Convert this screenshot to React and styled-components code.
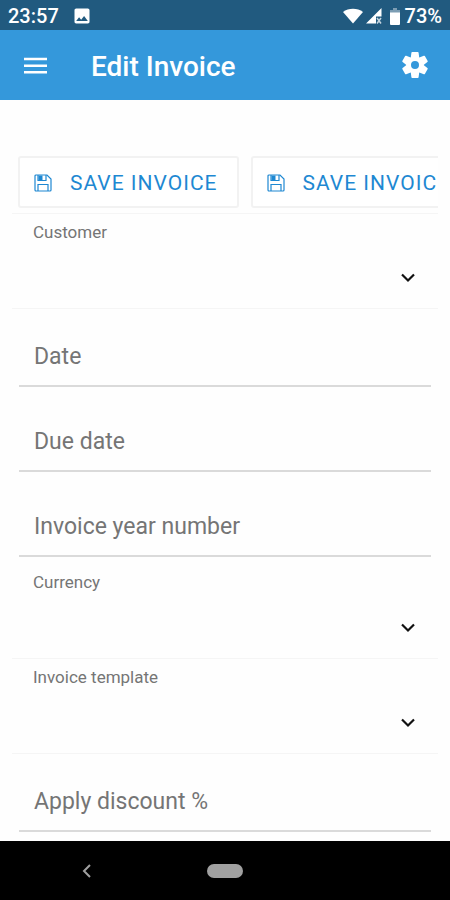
import { useId } from "react";
import styled, { createGlobalStyle } from "styled-components";
import { MdImage } from "react-icons/md";

const GlobalStyle = createGlobalStyle`
  * {
    box-sizing: border-box;
  }
  body {
    margin: 0;
    background: #fefefe;
    font-family: Roboto, "Liberation Sans", sans-serif;
  }
  button,
  input,
  select {
    font-family: inherit;
  }
`;

const Page = styled.div`
  display: flex;
  flex-direction: column;
  min-height: 100vh;
`;

const StatusBar = styled.div`
  display: flex;
  align-items: center;
  justify-content: space-between;
  height: 30px;
  padding: 2px 8px 0;
  background: #215a7f;
  color: #fff;
  font-size: 20px;
  font-weight: 500;
  line-height: 28px;
`;

const StatusGroup = styled.div`
  display: flex;
  align-items: center;
  gap: ${({ $gap }) => $gap}px;
`;

const AppBar = styled.header`
  display: flex;
  align-items: center;
  height: 70px;
  padding: 0 20px;
  background: #3498db;
  color: #fff;
`;

const IconButton = styled.button`
  display: flex;
  padding: 0;
  border: 0;
  background: none;
  color: inherit;
  cursor: pointer;
`;

const Title = styled.h1`
  flex: 1;
  margin: 0;
  padding: 4px 0 0 40px;
  font-size: 28px;
  font-weight: 500;
  line-height: 32px;
`;

const Content = styled.main`
  flex: 1;
  padding: 56px 12px 8px;
`;

const Actions = styled.div`
  display: flex;
  gap: 12px;
  padding: 0 0 5px 6px;
  overflow-x: auto;
  scrollbar-width: none;
  border-bottom: 1px solid #f5f5f5;
`;

const SaveButton = styled.button`
  display: flex;
  flex: none;
  align-items: center;
  gap: 18px;
  height: 52px;
  padding: 2px 19px 0 14px;
  border: 2px solid #f2f2f2;
  border-radius: 3px;
  background: #fff;
  color: #1e88d2;
  font-size: 21px;
  letter-spacing: 1px;
  text-transform: uppercase;
  cursor: pointer;
`;

const SelectRow = styled.div`
  display: grid;
  grid-template-rows: 36px 58px;
  border-bottom: 1px solid #f5f5f5;
`;

const SelectLabel = styled.label`
  padding-left: 21px;
  color: #757575;
  font-size: 17px;
  line-height: 36px;
`;

const SelectBox = styled.div`
  display: grid;
  align-items: center;

  > * {
    grid-area: 1 / 1;
  }
  > svg {
    justify-self: end;
    margin: 0 22px 3px 0;
    pointer-events: none;
  }
`;

const Select = styled.select`
  width: 100%;
  height: 100%;
  padding: 0 48px 0 21px;
  border: 0;
  background: none;
  color: #333;
  font-size: 20px;
  appearance: none;
`;

const Field = styled.div`
  display: grid;
  height: 78px;
  margin: 0 7px;
  border-bottom: 2px solid #dadada;

  & + & {
    margin-top: 7px;
  }
  & + ${SelectRow} {
    margin-top: 7px;
  }
  > * {
    grid-area: 1 / 1;
  }
`;

const FieldLabel = styled.label`
  padding: 34px 0 0 15px;
  color: #757575;
  font-size: 23px;
  line-height: 28px;
  pointer-events: none;
`;

const Input = styled.input`
  width: 100%;
  padding: 18px 15px 0;
  border: 0;
  outline: 0;
  background: none;
  color: #222;
  font-size: 23px;

  &:not(:placeholder-shown) + ${FieldLabel} {
    visibility: hidden;
  }
`;

const NavBar = styled.nav`
  display: grid;
  grid-template-columns: 1fr auto 1fr;
  align-items: center;
  height: 59px;
  background: #000;
  color: #a0a0a0;
`;

const BackButton = styled(IconButton)`
  justify-self: start;
  margin-left: 82px;
`;

const HomeButton = styled.button`
  width: 36px;
  height: 14px;
  padding: 0;
  border: 0;
  border-radius: 7px;
  background: #a0a0a0;
`;

const WifiIcon = () => (
  <svg width="20" height="16" viewBox="0 0 20 16" fill="#fff">
    <path d="M10 15.500 0 4C5.500-.4 14.500-.4 20 4Z" />
  </svg>
);

const SignalIcon = () => (
  <svg width="16" height="16" viewBox="0 0 16 16">
    <path d="M15.500 0v8.500H10v7H0Z" fill="#fff" />
    <path d="m11 10 4 5.500m0-5.500-4 5.500" stroke="#c5d5df" strokeWidth="1.500" />
  </svg>
);

const BatteryIcon = () => (
  <svg width="10" height="17" viewBox="0 0 10 17">
    <path d="M3 0h4v2h3v3H0V2h3Z" fill="#7c9db3" />
    <path d="M0 4.500h10V16a1 1 0 0 1-1 1H1a1 1 0 0 1-1-1Z" fill="#fff" />
  </svg>
);

const MenuIcon = () => (
  <svg width="31" height="31" viewBox="0 0 31 31" stroke="currentColor" strokeWidth="2.600">
    <path d="M4 9h23M4 15.700h23M4 22.300h23" />
  </svg>
);

const GearIcon = () => (
  <svg width="30" height="30" viewBox="-15 -15 30 30" fill="currentColor">
    <circle r="6.500" fill="none" stroke="currentColor" strokeWidth="5" />
    {[0, 60, 120, 180, 240, 300].map((angle) => (
      <path key={angle} d="M-4.200-7.500-3.600-12.200Q-3.500-13-2.800-13H2.800Q3.500-13 3.600-12.200L4.200-7.500Z" transform={`rotate(${angle})`} />
    ))}
  </svg>
);

const SaveIcon = () => (
  <svg width="18" height="18" viewBox="0 0 18 18" fill="none" stroke="currentColor" strokeWidth="1.200">
    <path d="M2 1h11l4 4v11a1 1 0 0 1-1 1H2a1 1 0 0 1-1-1V2a1 1 0 0 1 1-1Z" />
    <path d="M4 17v-6.500h10V17M4 1v5.500h8V1" />
    <path d="M4.500 1.500h4v4.500h-4z" fill="currentColor" stroke="none" />
  </svg>
);

const ChevronIcon = () => (
  <svg width="16" height="10" viewBox="0 0 16 10" fill="none" stroke="#111" strokeWidth="2.200">
    <path d="m2 1.500 6 6 6-6" />
  </svg>
);

const BackIcon = () => (
  <svg width="9" height="14" viewBox="0 0 9 14" fill="none" stroke="currentColor" strokeWidth="2">
    <path d="M8 1 2 7l6 6" />
  </svg>
);

const Dropdown = ({ label }) => {
  const id = useId();
  return (
    <SelectRow>
      <SelectLabel htmlFor={id}>{label}</SelectLabel>
      <SelectBox>
        <Select id={id} />
        <ChevronIcon />
      </SelectBox>
    </SelectRow>
  );
};

const TextField = ({ label }) => {
  const id = useId();
  return (
    <Field>
      <Input id={id} type="text" placeholder=" " />
      <FieldLabel htmlFor={id}>{label}</FieldLabel>
    </Field>
  );
};

const App = () => {
  return (
    <>
      <GlobalStyle />
      <Page>
        <StatusBar>
          <StatusGroup $gap={13}>
            <span>23:57</span>
            <MdImage size={20} />
          </StatusGroup>
          <StatusGroup $gap={5}>
            <StatusGroup $gap={8}>
              <StatusGroup $gap={3}>
                <WifiIcon />
                <SignalIcon />
              </StatusGroup>
              <BatteryIcon />
            </StatusGroup>
            <span>73%</span>
          </StatusGroup>
        </StatusBar>
        <AppBar>
          <IconButton aria-label="Menu">
            <MenuIcon />
          </IconButton>
          <Title>Edit Invoice</Title>
          <IconButton aria-label="Settings">
            <GearIcon />
          </IconButton>
        </AppBar>
        <Content>
          <Actions>
            <SaveButton type="button">
              <SaveIcon />
              Save invoice
            </SaveButton>
            <SaveButton type="button">
              <SaveIcon />
              Save invoice
            </SaveButton>
          </Actions>
          <Dropdown label="Customer" />
          <TextField label="Date" />
          <TextField label="Due date" />
          <TextField label="Invoice year number" />
          <Dropdown label="Currency" />
          <Dropdown label="Invoice template" />
          <TextField label="Apply discount %" />
        </Content>
        <NavBar>
          <BackButton aria-label="Back">
            <BackIcon />
          </BackButton>
          <HomeButton aria-label="Home" />
        </NavBar>
      </Page>
    </>
  );
};

export default App;
